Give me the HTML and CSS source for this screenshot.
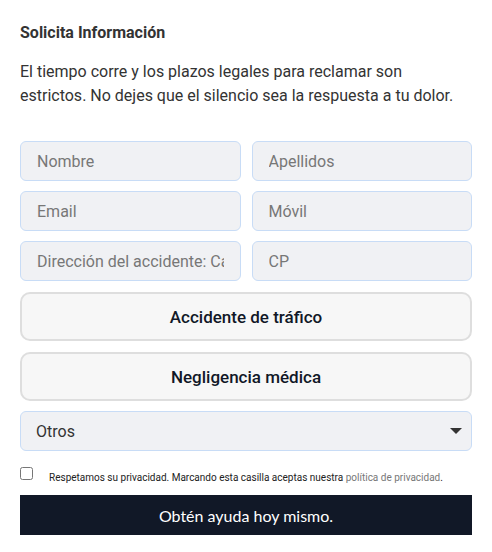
FILE: index.html
```html
<!DOCTYPE html>
<html>

<head>
    <meta charset="utf-8">
    <meta name="viewport" content="width=device-width">
    <title>Solicita Información</title>
    <link rel="stylesheet" href="styles.css">
</head>

<body>
    <div class="form-box">
        <h3 class="form-title">Solicita Información</h3>
        <p class="form-intro">El tiempo corre y los plazos legales para reclamar son estrictos. No dejes que el silencio sea la respuesta a tu dolor.</p>
        <form class="lead-form">
            <div class="field-grid">
                <input class="field" type="text" placeholder="Nombre">
                <input class="field" type="text" placeholder="Apellidos">
                <input class="field" type="email" placeholder="Email">
                <input class="field" type="tel" placeholder="Móvil">
                <input class="field" type="text" placeholder="Dirección del accidente: Calle, número, ciudad">
                <input class="field" type="text" placeholder="CP">
            </div>
            <button class="case-btn" type="button">Accidente de tráfico</button>
            <button class="case-btn" type="button">Negligencia médica</button>
            <div class="select-wrap">
                <select class="field select">
                    <option>Otros</option>
                </select>
                <span class="select-arrow"></span>
            </div>
            <label class="privacy">
                <input class="privacy-check" type="checkbox">
                <span class="privacy-text">Respetamos su privacidad. Marcando esta casilla aceptas nuestra <a href="#">política de privacidad</a>.</span>
            </label>
            <button class="submit-btn" type="submit">Obtén ayuda hoy mismo.</button>
        </form>
    </div>
</body>

</html>
```

FILE: styles.css
```css
body {
    margin: 0;
    background: #fff;
    font-family: Roboto, "Liberation Sans", sans-serif;
    color: #333;
}

.form-box {
    padding: 22px 20px 16px;
}

.form-title {
    margin: 0;
    font-size: 16px;
    line-height: 22px;
    font-weight: 700;
    color: #333;
}

.form-intro {
    margin: 16px 0 33px;
    font-size: 16px;
    line-height: 24px;
    color: #333;
}

.lead-form {
    display: flex;
    flex-direction: column;
}

.field-grid {
    display: grid;
    grid-template-columns: 1fr 1fr;
    gap: 10px 11px;
}

.field {
    box-sizing: border-box;
    width: 100%;
    height: 40px;
    padding: 0 16px;
    border: 1px solid #c8dcf6;
    border-radius: 6px;
    background: #f0f1f4;
    font-family: Roboto, "Liberation Sans", sans-serif;
    font-size: 16px;
    color: #333;
    outline: none;
}

.field::placeholder {
    color: #777;
}

.case-btn {
    box-sizing: border-box;
    height: 49px;
    margin-top: 11px;
    border: 2px solid #dedede;
    border-radius: 10px;
    background: #f7f7f7;
    font-family: Roboto, "Liberation Sans", sans-serif;
    font-size: 17px;
    font-weight: 500;
    color: #111827;
    cursor: pointer;
}

.select-wrap {
    position: relative;
    margin-top: 10px;
}

.select {
    appearance: none;
    -webkit-appearance: none;
    padding-left: 15px;
}

.select-arrow {
    position: absolute;
    right: 10px;
    top: 17px;
    width: 0;
    height: 0;
    border-left: 6px solid transparent;
    border-right: 6px solid transparent;
    border-top: 6px solid #333;
    pointer-events: none;
}

.privacy {
    display: flex;
    align-items: flex-start;
    margin-top: 15px;
}

.privacy-check {
    width: 13px;
    height: 13px;
    margin: 1px 16px 0 0;
}

.privacy-text {
    padding-top: 5px;
    font-size: 10px;
    line-height: 14px;
    color: #222;
}

.privacy-text a {
    color: #777;
    text-decoration: none;
}

.submit-btn {
    height: 40px;
    margin-top: 10px;
    border: none;
    background: #111827;
    font-family: Lato, "Noto Sans", sans-serif;
    font-size: 16px;
    font-weight: 400;
    color: #fff;
    cursor: pointer;
}
```
